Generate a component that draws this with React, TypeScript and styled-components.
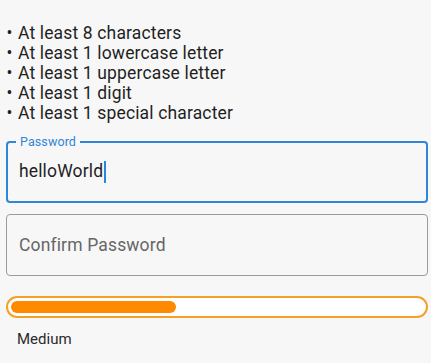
import styled, { createGlobalStyle } from 'styled-components';

const GlobalStyle = createGlobalStyle`
  html, body {
    margin: 0;
    padding: 0;
    background: #f7f7f7;
  }
  body {
    font-family: Roboto, "Liberation Sans", sans-serif;
    color: #1f1f1f;
  }
`;

const Page = styled.div`
  width: 431px;
  height: 363px;
  box-sizing: border-box;
  padding: 23px 3px 0 6px;
  display: flex;
  flex-direction: column;
`;

const RuleList = styled.ul`
  list-style: none;
  margin: 0;
  padding: 0;
  font-size: 17.5px;
  line-height: 20px;
  letter-spacing: 0.15px;
`;

const Rule = styled.li`
  display: flex;
  gap: 5px;
  &::before {
    content: '•';
    width: 7px;
    text-align: center;
  }
`;

const Field = styled.div<{ $focused?: boolean }>`
  position: relative;
  height: 62px;
  box-sizing: border-box;
  border: ${(p) => (p.$focused ? '2px solid #2f86d6' : '1px solid #9a9a9a')};
  border-radius: 4px;
  display: flex;
  align-items: center;
  padding: 0 ${(p) => (p.$focused ? '11px' : '12px')};
  margin-top: ${(p) => (p.$focused ? '18px' : '11px')};
  font-size: 17.5px;
  letter-spacing: 0.15px;
`;

const FloatingLabel = styled.span`
  position: absolute;
  top: -9px;
  left: 8px;
  padding: 0 4px;
  background: #f7f7f7;
  color: #2f86d6;
  font-size: 12.5px;
  line-height: 16px;
  letter-spacing: 0.1px;
`;

const Value = styled.span`
  color: #1f1f1f;
`;

const Caret = styled.span`
  display: inline-block;
  width: 1.5px;
  height: 22px;
  margin-left: 1px;
  background: #2f86d6;
  vertical-align: middle;
`;

const Placeholder = styled.span`
  color: #666;
`;

const Track = styled.div`
  margin-top: 20px;
  height: 22px;
  box-sizing: border-box;
  border: 2px solid #f5a02a;
  border-radius: 11px;
  background: #fff;
  padding: 3px;
`;

const Fill = styled.div`
  height: 100%;
  background: #ff8a00;
  border-radius: 6px;
`;

const Strength = styled.div`
  margin-top: 12px;
  padding-left: 11px;
  font-size: 15px;
  color: #2a2a2a;
`;

const rules = [
  'At least 8 characters',
  'At least 1 lowercase letter',
  'At least 1 uppercase letter',
  'At least 1 digit',
  'At least 1 special character',
];

export default function App() {
  const strength = 0.4;
  return (
    <>
      <GlobalStyle />
      <Page>
        <RuleList>
          {rules.map((r) => (
            <Rule key={r}>{r}</Rule>
          ))}
        </RuleList>
        <Field $focused>
          <FloatingLabel>Password</FloatingLabel>
          <Value>
            helloWorld
            <Caret />
          </Value>
        </Field>
        <Field>
          <Placeholder>Confirm Password</Placeholder>
        </Field>
        <Track>
          <Fill style={{ width: `${strength * 100}%` }} />
        </Track>
        <Strength>Medium</Strength>
      </Page>
    </>
  );
}
